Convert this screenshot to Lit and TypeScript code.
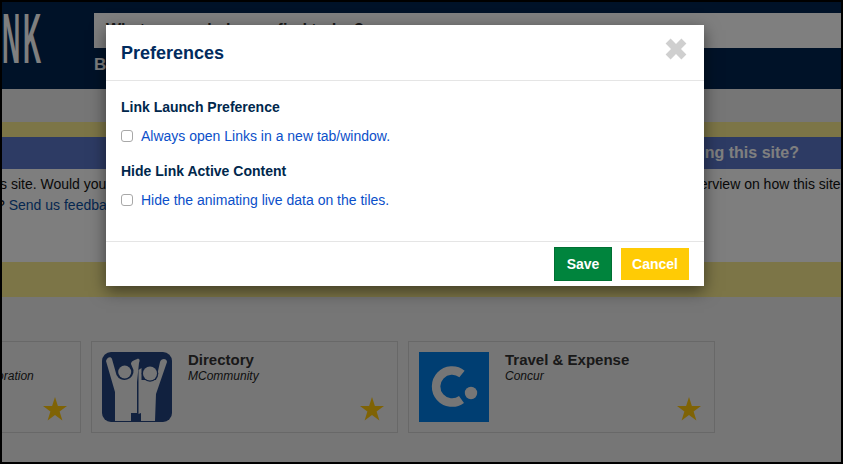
import { LitElement, html, css, svg } from "lit";
import { customElement } from "lit/decorators.js";

const star = svg`<svg class="star" viewBox="0 0 24 24" width="24" height="24"><path fill="#ffc60a" d="M12 0l2.9 8.9H24l-7.4 5.6 2.8 9-7.4-5.6-7.4 5.6 2.8-9L0 8.9h9.1z"/></svg>`;

@customElement("app-root")
export class AppRoot extends LitElement {
  static styles = css`
    :host { display: block; width: 843px; height: 464px; position: relative; overflow: hidden; background: #000; font-family: "Liberation Sans", Arial, sans-serif; }
    .page { position: absolute; inset: 2px; overflow: hidden; background: #ececec; display: flex; flex-direction: column; }
    .top { height: 87px; flex: none; background: #002550; display: flex; }
    .logo { width: 92px; flex: none; overflow: hidden; }
    .logo span { display: block; color: #fff; font-weight: 700; font-size: 70px; line-height: 60px; margin-top: 7px; margin-left: 0; transform: scaleX(.36); transform-origin: 0 0; white-space: nowrap; letter-spacing: 8px; }
    .search-col { flex: 1; padding-top: 11px; }
    .search { height: 35px; background: #fff; padding: 6px 12px 0; box-sizing: border-box; font-size: 16px; line-height: 22px; color: #333; font-weight: 700; overflow: hidden; }
    .nav { color: #fff; font-weight: 700; font-size: 17px; line-height: 18px; margin-top: 8px; }
    .gap1 { height: 33px; flex: none; }
    .yellow { background: #f8eb8f; padding: 15px 0 35px; flex: none; }
    .panel { display: grid; grid-template-columns: 420px 1fr; background: #fcfcfc; height: 125px; }
    .col { overflow: hidden; }
    .band { height: 32px; background: #5a76c8; color: #fff; font-weight: 700; font-size: 16px; line-height: 32px; display: flex; justify-content: flex-end; padding-right: 42px; white-space: nowrap; }
    .line { font-size: 14px; line-height: 21px; white-space: nowrap; color: #111; height: 21px; }
    .lines { padding-top: 5px; }
    .lines.r { padding-left: 263px; }
    .lines a { color: #0a4fa0; }
    .lft { margin-left: -2px; }
    .shift { margin-left: -3px; }
    .cards { display: flex; gap: 10px; margin-left: -228px; margin-top: 44px; flex: none; }
    .card { width: 307px; height: 92px; box-sizing: border-box; border: 1px solid #d0d0d0; padding: 10px; display: flex; gap: 16px; position: relative; flex: none; }
    .title { font-size: 15px; font-weight: 700; color: #333; line-height: 17px; margin-top: -1px; }
    .sub { font-size: 12px; font-style: italic; color: #222; line-height: 14px; margin-top: 1px; white-space: nowrap; }
    .thumb { width: 70px; height: 70px; flex: none; display: block; }
    .star { position: absolute; right: 13px; bottom: 11px; }
    .overlay { position: absolute; inset: 0; background: rgba(0,0,0,.5); }
    .modal { position: absolute; left: 106px; top: 25px; width: 598px; height: 261px; background: #fff; box-shadow: 0 5px 15px rgba(0,0,0,.5); display: flex; flex-direction: column; }
    .head { height: 55px; flex: none; border-bottom: 1px solid #e5e5e5; display: flex; align-items: center; justify-content: space-between; padding: 0 17px 0 15px; }
    h1 { margin: 0; font-size: 18px; line-height: 22px; color: #012b5e; font-weight: 700; }
    .close { display: block; margin-top: -8px; }
    .body { flex: 1; padding: 17px 15px 0; }
    h2 { margin: 0; font-size: 14px; line-height: 18px; color: #00274c; font-weight: 700; }
    label { display: flex; align-items: center; gap: 8px; color: #0b4fc9; font-size: 14px; line-height: 20px; margin: 10px 0 16px; }
    input { appearance: none; -webkit-appearance: none; margin: 0; width: 12px; height: 12px; border: 1px solid #a8a8a8; border-radius: 3px; background: #fff; box-sizing: border-box; }
    .foot { height: 44px; flex: none; border-top: 1px solid #e5e5e5; display: flex; justify-content: flex-end; align-items: center; gap: 9px; padding: 0 15px 0 0; }
    button { font: 700 14px/18px "Liberation Sans", Arial, sans-serif; color: #fff; padding: 0; }
    .save { width: 58px; height: 34px; background: #00843d; border: 1px solid #006f33; }
    .cancel { width: 68px; height: 32px; background: #ffcb05; border: 0; }
  `;

  render() {
    const navy = "#22427f";
    const fig = "#ececec";
    return html`
      <div class="page">
        <div class="top">
          <div class="logo"><span>NK</span></div>
          <div class="search-col">
            <div class="search">What can we help you find today?</div>
            <div class="nav">Browse</div>
          </div>
        </div>
        <div class="gap1"></div>
        <div class="yellow">
          <div class="panel">
            <div class="col">
              <div class="band"></div>
              <div class="lines lft">
                <div class="line">s site. Would you like to take a tour of it</div>
                <div class="line shift">? <a>Send us feedback about this site</a></div>
              </div>
            </div>
            <div class="col">
              <div class="band">How do I get started using this site?</div>
              <div class="lines r"><div class="line">overview on how this site</div></div>
            </div>
          </div>
        </div>
        <div class="cards">
          <div class="card">
            <div class="thumb"></div>
            <div class="text"><div class="title">Email</div><div class="sub">Mail, Calendar &amp; Collaboration</div></div>
            ${star}
          </div>
          <div class="card">
            <svg class="thumb" viewBox="0 0 70 70">
              <rect width="70" height="70" rx="9" fill=${navy}/>
              <g fill=${fig}>
                <path d="M4 9C5 5 9 4 10 7L14.5 23A9 9 0 0 0 31.5 18L29 12C29 9 33 8 35 7C38 6 38 9 37 11L35 30V61H29V69H13V40Z"/>
                <circle cx="22.7" cy="20" r="6.5"/>
                <path d="M36.5 62V18L39.5 16V28H54L58 10C59 6 65 6 65 10L54 42L53 69H39V61Z"/>
              </g>
              <circle cx="48" cy="21.5" r="8.3" fill=${navy}/>
              <circle cx="48" cy="21.5" r="7" fill=${fig}/>
            </svg>
            <div class="text"><div class="title">Directory</div><div class="sub">MCommunity</div></div>
            ${star}
          </div>
          <div class="card">
            <svg class="thumb" viewBox="0 0 70 70">
              <rect width="70" height="70" fill="#007ce4"/>
              <path d="M43 22A16 16 0 1 0 42.5 47.5" fill="none" stroke=${fig} stroke-width="8.5"/>
              <circle cx="52" cy="41" r="6.2" fill=${fig}/>
            </svg>
            <div class="text"><div class="title">Travel &amp; Expense</div><div class="sub">Concur</div></div>
            ${star}
          </div>
        </div>
      </div>
      <div class="overlay"></div>
      <div class="modal">
        <div class="head">
          <h1>Preferences</h1>
          <svg class="close" width="22" height="22" viewBox="0 0 22 22"><path fill="#cfcfcf" d="M5.6.6L11 6l5.4-5.4 5 5-5.4 5.4 5.4 5.4-5 5L11 16l-5.4 5.4-5-5L6 11 .6 5.6z"/></svg>
        </div>
        <div class="body">
          <h2>Link Launch Preference</h2>
          <label><input type="checkbox" />Always open Links in a new tab/window.</label>
          <h2>Hide Link Active Content</h2>
          <label><input type="checkbox" />Hide the animating live data on the tiles.</label>
        </div>
        <div class="foot">
          <button class="save">Save</button>
          <button class="cancel">Cancel</button>
        </div>
      </div>
    `;
  }
}
